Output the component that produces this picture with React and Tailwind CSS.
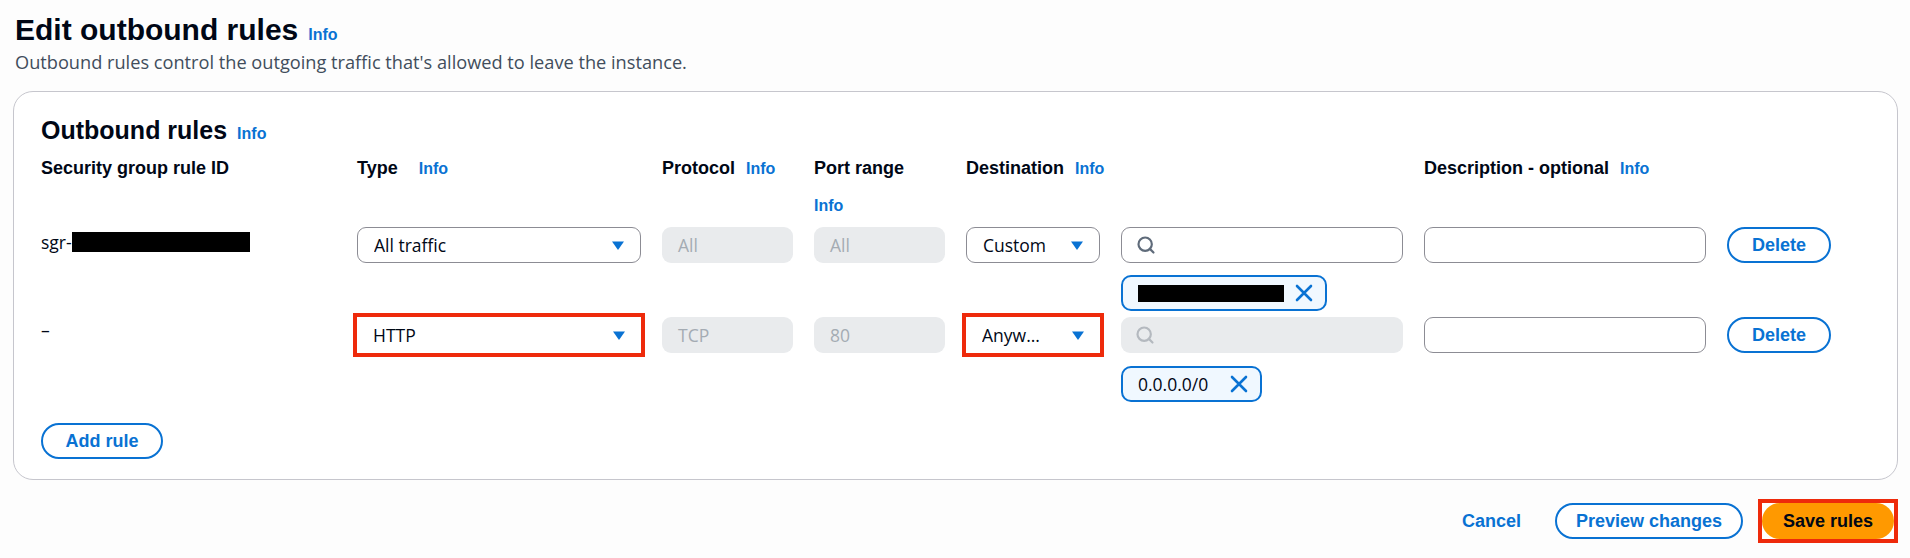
import { Search } from "lucide-react";

const blue = "text-[#0972d3]";
const body = "font-['Open_Sans',sans-serif] font-normal text-[17.5px]";

function Info({ className = "" }) {
  return <a className={`text-[16px] font-bold ${blue} ${className}`}>Info</a>;
}

function Caret() {
  return (
    <svg width="14" height="11" viewBox="0 0 14 11" className="shrink-0">
      <path d="M1 1.5h12L7 10z" fill="#0972d3" />
    </svg>
  );
}

function Cross() {
  return (
    <svg width="18" height="18" viewBox="0 0 18 18" className="shrink-0">
      <path d="M2 2l14 14M16 2L2 16" stroke="#0972d3" strokeWidth="2.6" strokeLinecap="round" />
    </svg>
  );
}

function Select({ value, highlight = false }) {
  const box = (
    <div
      className={`flex h-[36px] items-center justify-between bg-white pl-[16px] pr-[15px] ${body} ${
        highlight ? "rounded-[6px]" : "rounded-[9px] border border-[#8c8c94]"
      }`}
    >
      <span className="truncate">{value}</span>
      <Caret />
    </div>
  );
  if (!highlight) return box;
  return <div className="-m-[4px] border-[4px] border-[#ee2a0b] bg-white">{box}</div>;
}

function Disabled({ value }) {
  return (
    <div className={`flex h-[36px] items-center rounded-[9px] bg-[#e9ebed] pl-[16px] text-[#a4abb3] ${body}`}>
      {value}
    </div>
  );
}

function SearchBox({ disabled = false }) {
  return (
    <div
      className={`flex h-[36px] items-center rounded-[9px] pl-[14px] ${
        disabled ? "bg-[#e9ebed]" : "border border-[#8c8c94] bg-white"
      }`}
    >
      <Search size={20} strokeWidth={2.6} className={disabled ? "text-[#b4b9bf]" : "text-[#5f6b7a]"} />
    </div>
  );
}

function Token({ children, width }) {
  return (
    <div
      className={`flex h-[36px] items-center justify-between rounded-[10px] border-2 border-[#0972d3] bg-[#f0f8ff] pl-[15px] pr-[12px] ${body} ${width}`}
    >
      {children}
      <Cross />
    </div>
  );
}

function Outline({ children, className = "" }) {
  return (
    <button
      className={`h-[36px] rounded-full border-2 border-[#0972d3] bg-white text-[18px] font-bold ${blue} ${className}`}
    >
      {children}
    </button>
  );
}

const grid =
  "grid grid-cols-[295px_284px_131px_131px_134px_282px_282px_104px] gap-x-[21px] items-start";

export default function App() {
  return (
    <div className="min-h-screen bg-[#fdfdfd] px-[12px] pt-[12px] font-['Liberation_Sans',Arial,sans-serif] text-[18px] text-[#000716]">
      <div className="flex items-baseline gap-[10px] pl-[3px]">
        <h1 className="text-[30px] font-bold leading-[36px]">Edit outbound rules</h1>
        <Info />
      </div>
      <p className="mt-[2px] pl-[3px] font-['Open_Sans',sans-serif] text-[18.2px] leading-[24px] text-[#414d5c]">
        Outbound rules control the outgoing traffic that's allowed to leave the instance.
      </p>

      <section className="mt-[17px] ml-[1px] rounded-[20px] border border-[#c6c6cd] bg-white pl-[27px] pr-[20px] pt-[23px] pb-[20px]">
        <div className="flex items-baseline gap-[10px]">
          <h2 className="text-[25px] font-bold leading-[30px]">Outbound rules</h2>
          <Info />
        </div>

        <div className={`${grid} mt-[10px] font-bold leading-[24px]`}>
          <div>Security group rule ID</div>
          <div>
            Type <Info className="ml-[16px]" />
          </div>
          <div>
            Protocol <Info className="ml-[6px]" />
          </div>
          <div>
            <div>Port range</div>
            <div className="mt-[13px]">
              <Info />
            </div>
          </div>
          <div className="col-span-2">
            Destination <Info className="ml-[6px]" />
          </div>
          <div>
            Description - optional <Info className="ml-[6px]" />
          </div>
          <div />
        </div>

        <div className={`${grid} mt-[9px]`}>
          <div className={`flex items-center pt-[3px] leading-[24px] ${body}`}>
            sgr-<span className="inline-block h-[20px] w-[178px] bg-black" />
          </div>
          <Select value="All traffic" />
          <Disabled value="All" />
          <Disabled value="All" />
          <Select value="Custom" />
          <div>
            <SearchBox />
            <Token width="mt-[12px] w-[206px]">
              <span className="inline-block h-[17px] w-[146px] bg-black" />
            </Token>
          </div>
          <div className="h-[36px] rounded-[9px] border border-[#8c8c94] bg-white" />
          <Outline className="w-[104px]">Delete</Outline>
        </div>

        <div className={`${grid} mt-[6px]`}>
          <div className={`pt-[1px] leading-[24px] ${body}`}>–</div>
          <Select value="HTTP" highlight />
          <Disabled value="TCP" />
          <Disabled value="80" />
          <Select value="Anyw..." highlight />
          <div>
            <SearchBox disabled />
            <Token width="mt-[13px] w-[141px]">
              <span>0.0.0.0/0</span>
            </Token>
          </div>
          <div className="h-[36px] rounded-[9px] border border-[#8c8c94] bg-white" />
          <Outline className="w-[104px]">Delete</Outline>
        </div>

        <Outline className="mt-[21px] w-[122px]">Add rule</Outline>
      </section>

      <div className="mt-[19px] flex items-center justify-end">
        <button className={`font-bold ${blue}`}>Cancel</button>
        <Outline className="ml-[34px] w-[188px]">Preview changes</Outline>
        <div className="ml-[15px] border-[4px] border-[#ee2a0b] bg-white">
          <button className="h-[36px] w-[132px] rounded-full bg-[#ff9900] font-bold text-[#000716]">
            Save rules
          </button>
        </div>
      </div>
    </div>
  );
}
